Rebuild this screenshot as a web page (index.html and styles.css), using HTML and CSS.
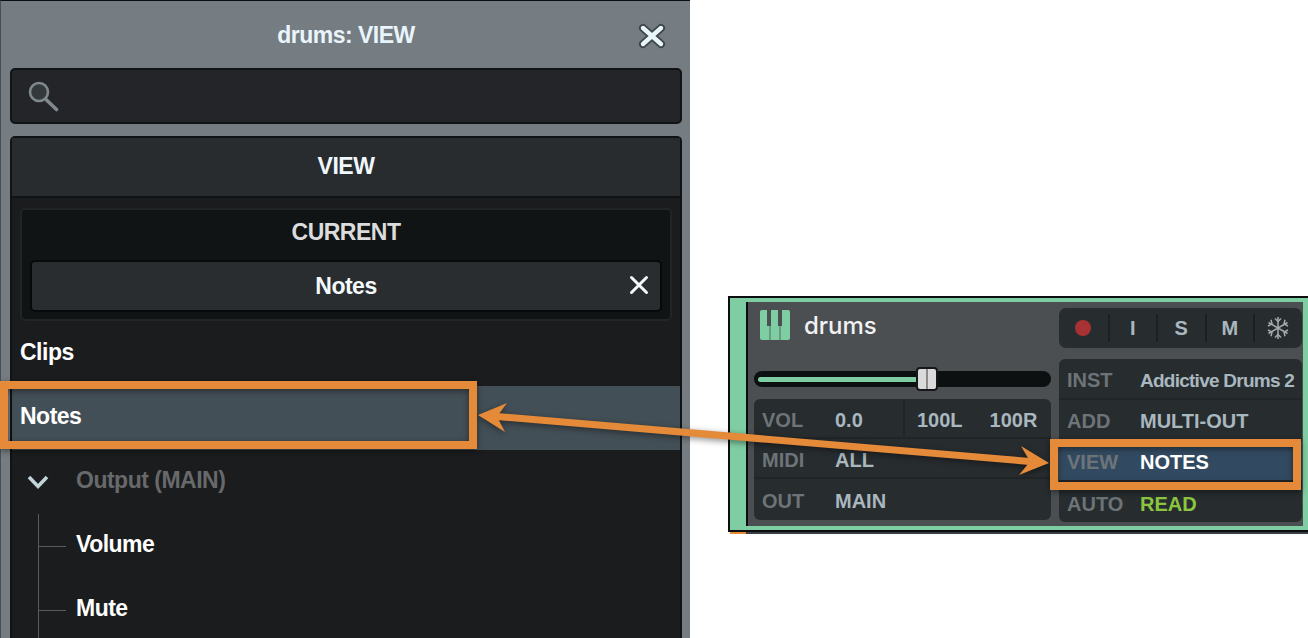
FILE: index.html
```html
<!DOCTYPE html>
<html lang="en">

<head>
  <meta charset="UTF-8" />
  <title>drums: VIEW</title>
  <link rel="stylesheet" href="styles.css">
</head>

<body>

  <div class="panel">
    <div class="panel-title">
      <span>drums: VIEW</span>
      <svg class="close-icon" width="30" height="28" viewBox="0 0 30 28">
        <path d="M6 6 L24 22 M24 6 L6 22" stroke="#3d4549" stroke-width="8" stroke-linecap="round" />
        <path d="M6 6 L24 22 M24 6 L6 22" stroke="#e8f6fc" stroke-width="4.400" stroke-linecap="round" />
      </svg>
    </div>

    <div class="search">
      <svg width="34" height="34" viewBox="0 0 34 34" fill="none" stroke="#808a8e">
        <circle cx="12" cy="12" r="9" fill="#34393c" stroke-width="2.600" />
        <path d="M19 19.500 L29.500 29.500" stroke-width="3.600" stroke-linecap="round" />
      </svg>
    </div>

    <div class="view-box">
      <div class="view-head">VIEW</div>
      <div class="current">
        <div class="current-title">CURRENT</div>
        <div class="current-item">
          <span>Notes</span>
          <svg class="item-x" width="22" height="22" viewBox="0 0 22 22">
            <path d="M3.500 3.500 L18.500 18.500 M18.500 3.500 L3.500 18.500" stroke="#f2f8fc" stroke-width="3" stroke-linecap="round" />
          </svg>
        </div>
      </div>
      <div class="row">Clips</div>
      <div class="row row-active">Notes</div>
      <div class="row row-output">
        <svg class="chevron" width="24" height="16" viewBox="0 0 24 16" fill="none">
          <path d="M3 3 L12 12.500 L21 3" stroke="#c3d3da" stroke-width="3.600" />
        </svg>
        Output (MAIN)
      </div>
      <div class="row row-child">Volume</div>
      <div class="row row-child">Mute</div>
    </div>
  </div>

  <div class="track">
    <div class="track-frame">
      <div class="track-body">
        <div class="track-left">
          <div class="track-name">
            <svg width="30" height="30" viewBox="0 0 30 30">
              <rect width="30" height="30" rx="2" fill="#7fcda3" />
              <path d="M7 0 H11 V16 H10.400 V30 H9.600 V16 H7 Z M18 0 H22 V16 H20.400 V30 H19.600 V16 H18 Z" fill="#4b4f52" />
            </svg>
            <span>drums</span>
          </div>
          <div class="fader">
            <div class="fader-fill"></div>
            <div class="fader-thumb"></div>
          </div>
          <div class="grid">
            <div class="grid-row">
              <span class="lbl">VOL</span><span class="val val-vol">0.0</span>
              <span class="pan"><span class="val">100L</span><span class="val">100R</span></span>
            </div>
            <div class="grid-row"><span class="lbl">MIDI</span><span class="val">ALL</span></div>
            <div class="grid-row"><span class="lbl">OUT</span><span class="val">MAIN</span></div>
          </div>
        </div>

        <div class="track-right">
          <div class="buttons">
            <div class="btn"><span class="rec"></span></div>
            <div class="btn">I</div>
            <div class="btn">S</div>
            <div class="btn">M</div>
            <div class="btn">
              <svg width="24" height="24" viewBox="0 0 24 24" fill="none" stroke="#a2aaad" stroke-width="1.500">
                <path d="M12 1 V23 M2.500 6.500 L21.500 17.500 M21.500 6.500 L2.500 17.500" />
                <path d="M9 2.500 L12 5.500 L15 2.500 M9 21.500 L12 18.500 L15 21.500" />
                <path d="M2 10 L6 7.800 L5 3.800 M22 14 L18 16.200 L19 20.200 M22 10 L18 7.800 L19 3.800 M2 14 L6 16.200 L5 20.200" />
              </svg>
            </div>
          </div>
          <div class="grid grid-right">
            <div class="grid-row"><span class="lbl">INST</span><span class="val val-inst">Addictive Drums 2</span></div>
            <div class="grid-row"><span class="lbl">ADD</span><span class="val">MULTI-OUT</span></div>
            <div class="grid-row grid-row-view"><span class="lbl">VIEW</span><span class="val val-white">NOTES</span></div>
            <div class="grid-row"><span class="lbl">AUTO</span><span class="val val-green">READ</span></div>
          </div>
        </div>
      </div>
    </div>
    <div class="track-foot"></div>
  </div>

  <!-- callouts drawn over the screenshot -->
  <svg class="callouts" width="1308" height="638" viewBox="0 0 1308 638" fill="none">
    <rect x="4" y="385" width="469" height="60" stroke="#e58a39" stroke-width="8" />
    <rect x="1054" y="443" width="243" height="43" stroke="#e58a39" stroke-width="8" />
    <path d="M497 416.500 L1030 461.500" stroke="#e58a39" stroke-width="7" />
    <path d="M478 415 L507 403 L497 416.500 L505 432 Z" fill="#e58a39" />
    <path d="M1049 463 L1021 446 L1030 461.500 L1019 475 Z" fill="#e58a39" />
  </svg>

</body>
</html>
```

FILE: styles.css
```css
* {
  box-sizing: border-box;
}

body {
  margin: 0;
  height: 638px;
  width: 1308px;
  overflow: hidden;
  display: flex;
  align-items: flex-start;
  background: #fff;
  font-family: "Liberation Sans", Arial, sans-serif;
  font-weight: bold;
  position: relative;
}

/* left panel */
.panel {
  width: 690px;
  height: 638px;
  flex: none;
  padding: 2px 8px 0 10px;
  background: #767d82;
  border-left: 1px solid #4a4f52;
  border-top: 1px solid #0c0d0e;
  overflow: hidden;
  color: #fff;
  font-size: 23px;
  letter-spacing: -0.5px;
}

.panel-title {
  height: 65px;
  position: relative;
  display: flex;
  justify-content: center;
  align-items: center;
  color: #e9f5fc;
  margin-left: -1px;
}

.close-icon {
  position: absolute;
  right: 15px;
  top: 19px;
}

.search {
  height: 56px;
  margin-left: -1px;
  padding: 10px 0 0 15px;
  background: #232528;
  border: 2px solid #121315;
  border-radius: 5px;
}

.view-box {
  margin: 12px 0 0 -1px;
  background: #1a1c1e;
  border: 2px solid #111214;
  border-bottom: 0;
  border-radius: 5px 5px 0 0;
  height: 520px;
}

.view-head {
  height: 60px;
  line-height: 56px;
  text-align: center;
  background: #282c2f;
  border-bottom: 2px solid #111214;
  color: #f0f8fd;
}

.current {
  margin: 10px 8px 1px;
  height: 113px;
  background: #111415;
  border: 2px solid #222527;
  border-radius: 5px;
  padding: 0 8px;
}

.current-title {
  height: 50px;
  line-height: 44px;
  text-align: center;
  color: #dcdcdc;
}

.current-item {
  height: 52px;
  position: relative;
  line-height: 48px;
  text-align: center;
  background: #292d30;
  border: 2px solid #08090a;
  border-radius: 5px;
  color: #f4f9fc;
}

.item-x {
  position: absolute;
  right: 10px;
  top: 12px;
}

.row {
  height: 64px;
  line-height: 61px;
  padding-left: 8px;
  position: relative;
}

.row-active {
  background: #434f56;
}

.row-output {
  padding-left: 64px;
  color: #67696b;
}

.chevron {
  position: absolute;
  left: 14px;
  top: 24px;
}

.row-child {
  padding-left: 64px;
}

.row-child::before {
  content: "";
  position: absolute;
  left: 26px;
  top: 0;
  bottom: 0;
  width: 1px;
  background: #5a5b5d;
}

.row-child::after {
  content: "";
  position: absolute;
  left: 26px;
  top: 32px;
  width: 28px;
  height: 1px;
  background: #5a5b5d;
}

/* track on the right */
.track {
  width: 580px;
  margin: 296px 0 0 38px;
  flex: none;
}

.track-frame {
  height: 236px;
  padding: 4px 5px 4px 16px;
  background: #7fcda3;
  border: solid #0c0d0e;
  border-width: 2px 0 2px 2px;
}

.track-body {
  height: 224px;
  display: flex;
  gap: 8px;
  padding: 6px 0 0 6px;
  background: #4b4f52;
  border-left: 2px solid #0c0d0e;
}

.track-left {
  width: 297px;
  flex: none;
}

.track-right {
  width: 243px;
  flex: none;
}

.track-name {
  height: 63px;
  display: flex;
  gap: 14px;
  font-family: Inter, sans-serif;
  font-weight: 500;
  font-size: 24px;
  color: #f2f2f2;
  padding: 2px 0 0 6px;
  align-items: flex-start;
}

.track-name span {
  line-height: 32px;
}

.fader {
  height: 16px;
  position: relative;
  background: #0d1011;
  border-radius: 8px;
}

.fader-fill {
  position: absolute;
  left: 4px;
  top: 6px;
  width: 160px;
  height: 5px;
  background: #7fcda3;
  border-radius: 3px;
}

.fader-thumb {
  position: absolute;
  left: 162px;
  top: -4px;
  width: 22px;
  height: 24px;
  background: linear-gradient(90deg, #dadada 44%, #8a8a8a 44%, #8a8a8a 56%, #dadada 56%);
  border: 2px solid #15181a;
  border-radius: 4px;
}

.grid {
  margin-top: 12px;
  background: #272c2f;
  border-radius: 6px;
  height: 121px;
  font-size: 20px;
}

.grid-row {
  height: 40px;
  display: flex;
  align-items: center;
  padding: 4px 0 0 8px;
  border-bottom: 2px solid #212527;
}

.grid-row:last-child {
  border-bottom: 0;
}

.lbl {
  width: 73px;
  color: #6d7478;
}

.val {
  color: #a9b7bf;
  white-space: nowrap;
}

.val-vol {
  width: 68px;
}

.val-inst {
  font-size: 19px;
  letter-spacing: -0.75px;
}

.pan {
  display: flex;
  gap: 27px;
  height: 38px;
  margin-top: -4px;
  padding: 4px 0 0 12px;
  align-items: center;
  border-left: 2px solid #212527;
}

.val-white {
  color: #fff;
}

.val-green {
  color: #8cc63f;
}

.buttons {
  height: 40px;
  display: flex;
  align-items: center;
  background: #272c2f;
  border-radius: 7px;
  font-size: 20px;
  color: #a9b7bf;
}

.btn {
  width: 48.500px;
  height: 28px;
  display: flex;
  align-items: center;
  justify-content: center;
  border-left: 2px solid #1c2022;
}

.btn:first-child {
  border-left: 0;
}

.rec {
  width: 16px;
  height: 16px;
  border-radius: 50%;
  background: #a83233;
}

.grid-right {
  margin-top: 11px;
  height: 163px;
}

.grid-right .grid-row {
  height: 41px;
}

.grid-row-view {
  background: #324a61;
}

.track-foot {
  height: 2px;
  margin-left: 2px;
  background: #3a3d3f;
  border-left: 16px solid #e58a39;
}

/* overlay */
.callouts {
  position: absolute;
  left: 0;
  top: 0;
  filter: drop-shadow(0 2px 3px rgba(0, 0, 0, 0.45));
}
```
